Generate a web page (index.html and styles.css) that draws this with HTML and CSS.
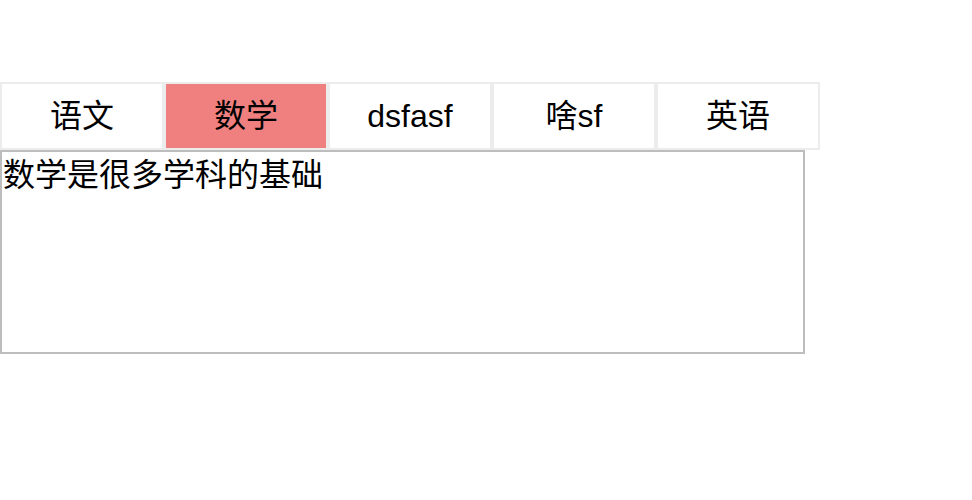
FILE: index.html
```html
<!DOCTYPE html>
<html lang="zh">
<head>
<meta charset="utf-8">
<title>Tabs</title>
<link rel="stylesheet" href="styles.css">
</head>
<body>
<div class="tabs">
  <ul class="tab-list">
    <li class="tab">语文</li>
    <li class="tab active">数学</li>
    <li class="tab">dsfasf</li>
    <li class="tab">啥sf</li>
    <li class="tab">英语</li>
  </ul>
  <div class="panel">数学是很多学科的基础</div>
</div>
</body>
</html>
```
FILE: styles.css
```css
html, body {
  margin: 0;
  padding: 0;
  background: #fff;
}
body {
  font-family: "Liberation Sans", "Noto Sans CJK SC", sans-serif;
  color: #000;
}
.tabs {
  padding-top: 82px;
}
.tab-list {
  list-style: none;
  margin: 0;
  padding: 0;
  display: flex;
}
.tab {
  width: 160px;
  height: 64px;
  line-height: 64px;
  border: 2px solid #ececec;
  text-align: center;
  font-size: 32px;
}
.tab.active {
  background: #f08080;
}
.panel {
  width: 800px;
  height: 200px;
  border: 2px solid #bdbdbd;
  font-size: 32px;
  line-height: 46px;
  padding: 0 0 0 1px;
  box-sizing: content-box;
}
```
